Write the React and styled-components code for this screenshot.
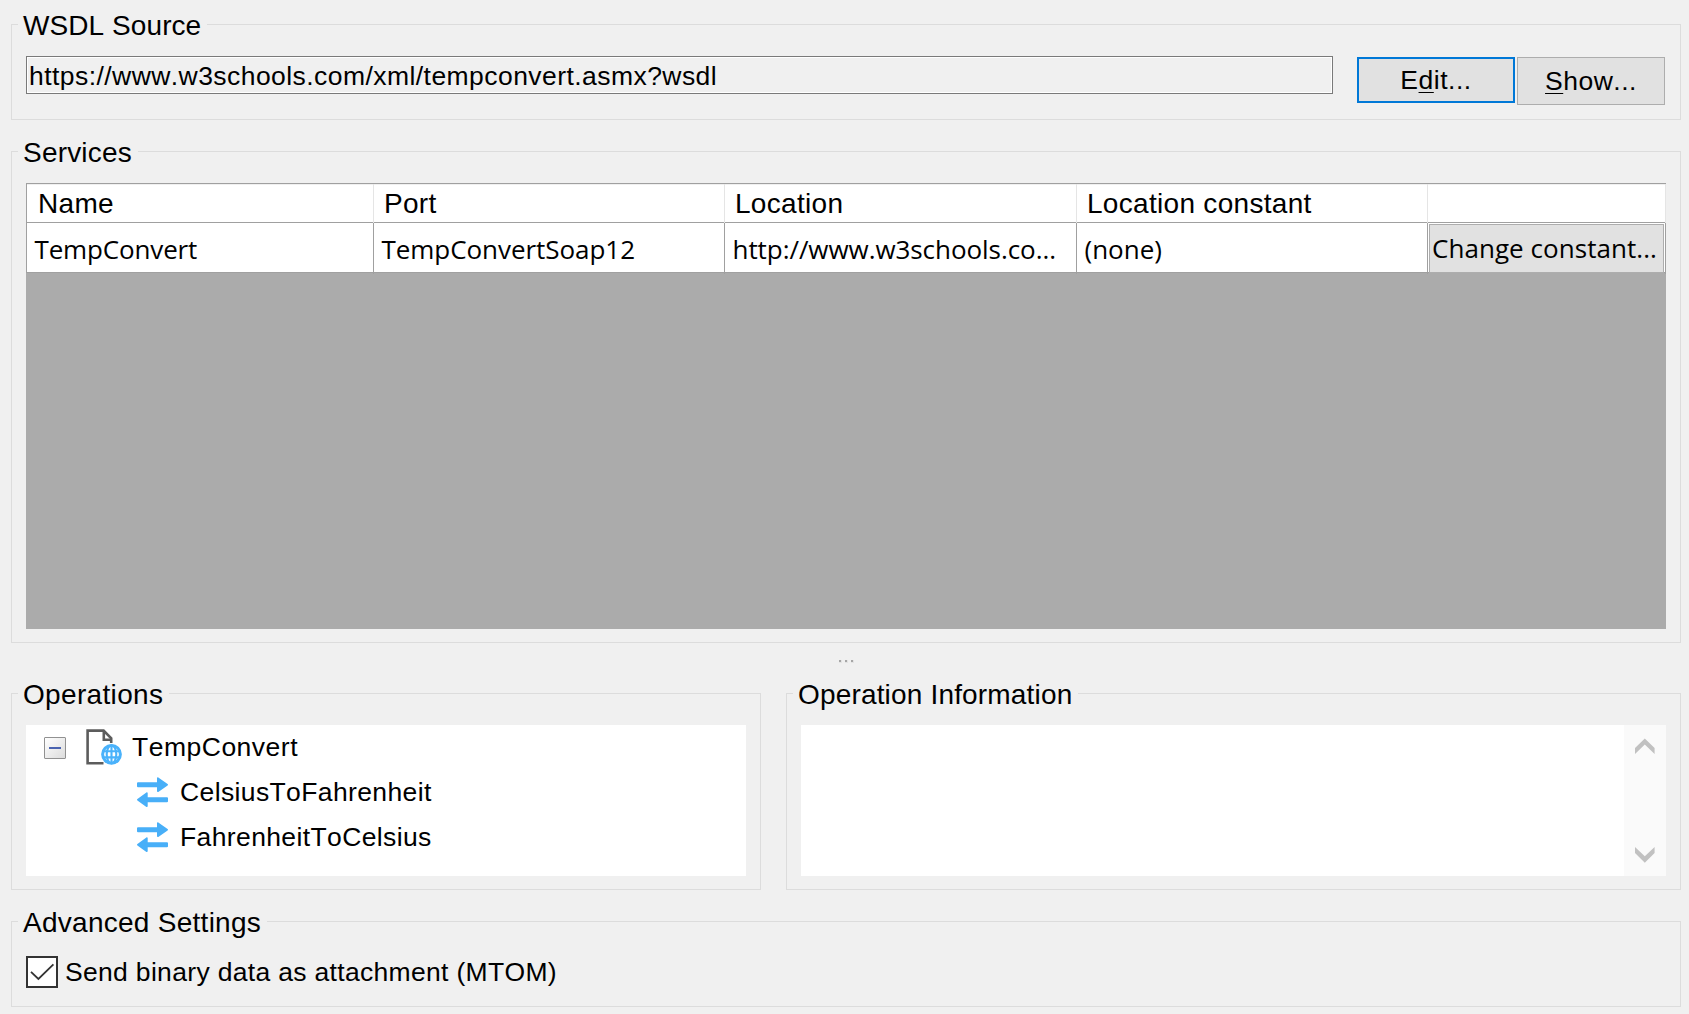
import React from "react";
import styled, { createGlobalStyle } from "styled-components";

const GlobalStyle = createGlobalStyle`
  *, *::before, *::after { box-sizing: border-box; }
  body {
    margin: 0;
    background: #f0f0f0;
    color: #000;
    font-family: "Liberation Sans", Arial, sans-serif;
    font-size: 26.5px;
    font-kerning: none;
    overflow: hidden;
  }
`;

const Window = styled.main`
  display: flex;
  flex-direction: column;
  gap: 16px;
  width: 1689px;
  height: 1014px;
  padding: 9px 8px 7px 11px;
  background: #f0f0f0;
`;

const Group = styled.fieldset`
  min-width: 0;
  margin: 0;
  width: ${(p) => p.$width || "auto"};
  height: ${(p) => p.$height}px;
  flex: ${(p) => (p.$grow ? "1 1 0" : "none")};
  padding: ${(p) => p.$top || 16}px 14px 13px;
  border: 1px solid #dcdcdc;
`;

const Legend = styled.legend`
  height: 31px;
  margin-left: -8px;
  padding: 0 6px 0 5px;
  font-size: 28px;
  line-height: 33px;
  letter-spacing: ${(p) => p.$spacing || 0}px;
  white-space: nowrap;
`;

const SourceRow = styled.div`
  display: flex;
  align-items: flex-start;
`;

const UrlField = styled.div`
  width: 1307px;
  height: 38px;
  margin-right: 24px;
  padding: 1px 0 0 2px;
  border: 1px solid #7a7a7a;
  box-shadow: inset 0 0 0 1px #fff;
  line-height: 36px;
  letter-spacing: 0.44px;
`;

const Button = styled.button`
  width: ${(p) => p.$width}px;
  height: ${(p) => p.$height}px;
  margin: 1px ${(p) => (p.$focused ? 2 : 0)}px 0 0;
  padding: 0;
  border: ${(p) => (p.$focused ? "2px solid #0078d7" : "1px solid #adadad")};
  background: #e1e1e1;
  color: #000;
  font: inherit;
  line-height: 40px;
  letter-spacing: 0.5px;
`;

const Key = styled.span`
  text-decoration: underline;
  text-decoration-thickness: 1px;
  text-underline-offset: 3px;
  text-decoration-skip-ink: none;
`;

const Stack = styled.div`
  display: flex;
  flex-direction: column;
`;

const Grid = styled.div`
  height: 446px;
  background: #ababab;
`;

const columns = "348px 351px 352px 351px 238px";

const GridHeader = styled.div`
  display: grid;
  grid-template-columns: ${columns};
  height: 40px;
  border-top: 1px solid #a0a0a0;
  border-bottom: 1px solid #a0a0a0;
  background: #fff;
  box-shadow: inset 1px 0 #a0a0a0, inset 0 1px #f0f0f0;
  font-size: 28px;
  line-height: 39px;
`;

const HeaderCell = styled.div`
  padding-left: ${(p) => (p.$first ? 12 : 10)}px;
  border-right: 1px solid #e5e5e5;
  letter-spacing: 0.3px;
`;

const GridRow = styled.div`
  display: grid;
  grid-template-columns: ${columns};
  height: 50px;
  border-bottom: 1px solid #a0a0a0;
  background: #fff;
  box-shadow: inset 1px 0 #a0a0a0;
  font-family: "Open Sans", "Noto Sans", sans-serif;
  font-size: 26px;
  line-height: 49px;
`;

const Cell = styled.div`
  padding: 2px 0 0 ${(p) => (p.$first ? 8.5 : 7.5)}px;
  border-right: 1px solid #a0a0a0;
  white-space: nowrap;
  letter-spacing: ${(p) => p.$spacing || 0}px;
`;

const ButtonCell = styled.div`
  display: flex;
  padding: 1px;
  border-right: 1px solid #a0a0a0;
`;

const CellButton = styled.button`
  flex: 1;
  min-width: 0;
  padding: 0 0 0 2px;
  border: 1px solid #adadad;
  background: #e1e1e1;
  color: #000;
  font: inherit;
  line-height: 45px;
  text-align: left;
  white-space: nowrap;
  letter-spacing: 0.05px;
`;

const Splitter = styled.div`
  display: flex;
  justify-content: center;
  gap: 3px;
  height: 35px;
  padding-top: 17px;
`;

const Grip = styled.span`
  width: 3px;
  height: 3px;
  background: linear-gradient(#a6a6a6, #a6a6a6) 0 0 / 2px 2px no-repeat, #e3e3e3;
`;

const Panels = styled.div`
  display: flex;
  gap: 25px;
`;

const Tree = styled.div`
  height: 151px;
  background: #fff;
`;

const TreeRow = styled.div`
  display: flex;
  align-items: flex-start;
  height: 45px;
  padding-left: ${(p) => (p.$child ? 111 : 18)}px;
  > svg {
    margin-top: ${(p) => (p.$child ? 7 : 4)}px;
  }
`;

const TreeLabel = styled.span`
  height: 45px;
  margin-left: 10px;
  line-height: 45px;
  letter-spacing: ${(p) => p.$spacing}px;
`;

const Toggle = styled.span`
  display: flex;
  align-items: center;
  justify-content: center;
  width: 22px;
  height: 22px;
  margin: 12px 20px 0 0;
  border: 1px solid #919191;
  border-radius: 1px;
  background: linear-gradient(135deg, #fff, #dcdcdc);
  &::before {
    content: "";
    width: 12px;
    height: 2px;
    background: #4a63b0;
  }
`;

const InfoBox = styled.div`
  display: flex;
  justify-content: flex-end;
  height: 151px;
  background: #fff;
`;

const ScrollBar = styled.div`
  display: flex;
  flex-direction: column;
  justify-content: space-between;
  align-items: center;
  width: 42px;
  padding: 13px 1px 13px 0;
  background: #fafafa;
`;

const CheckRow = styled.label`
  display: flex;
  gap: 7px;
  line-height: 32px;
  letter-spacing: 0.32px;
`;

const CheckBox = styled.span`
  width: 32px;
  height: 32px;
  border: 2px solid #333;
  background: #fff;
  svg { display: block; }
`;

const FileGlobeIcon = () => (
  <svg width="36" height="36" viewBox="0 0 36 36" fill="none">
    <path d="M17.5 34.2H1.6V1.6h16l7.6 7.8V14" stroke="#5c5c5c" strokeWidth="2.6" />
    <path d="M17.8 2v8.8h7.6" stroke="#5c5c5c" strokeWidth="2.6" />
    <circle cx="25.5" cy="25.3" r="8.9" fill="#fff" stroke="#4ab2fb" strokeWidth="3" />
    <g stroke="#4ab2fb" strokeWidth="2.1">
      <ellipse cx="25.5" cy="25.3" rx="4.8" ry="9" />
      <path d="M25.5 16v18.6M16.8 22.2h17.4M16.8 28.4h17.4" />
    </g>
  </svg>
);

const SwapIcon = () => (
  <svg width="33" height="31" viewBox="0 0 33 31" fill="#48aff8">
    <path d="M1 5.3h19V1c0-.7.8-1 1.3-.6l9.3 6.6c.5.4.5 1 0 1.4l-9.3 6.5c-.5.4-1.3.1-1.3-.6v-4H1a1 1 0 0 1-1-1v-3a1 1 0 0 1 1-1z" />
    <path d="M30 20.3H10.7V16c0-.7-.8-1-1.3-.6L.4 22c-.5.4-.5 1 0 1.4l9 6.5c.5.4 1.3.1 1.3-.6v-4H30a1 1 0 0 0 1-1v-3a1 1 0 0 0-1-1z" />
  </svg>
);

const Arrow = ({ down }) => (
  <svg width="20" height="16" viewBox="0 0 20 16" fill="#c1c1c1">
    <path d={down ? "M0 0l9.8 9.3L19.6 0v6L9.8 15.7 0 6z" : "M0 16l9.8-9.6L19.6 16v-6L9.8.5 0 10z"} />
  </svg>
);

export default function App() {
  return (
    <>
      <GlobalStyle />
      <Window>
        <Group $height={111}>
          <Legend $spacing={0.08}>WSDL Source</Legend>
          <SourceRow>
            <UrlField>https://www.w3schools.com/xml/tempconvert.asmx?wsdl</UrlField>
            <Button $focused $width={158} $height={46}>E<Key>d</Key>it...</Button>
            <Button $width={148} $height={48}><Key>S</Key>how...</Button>
          </SourceRow>
        </Group>
        <Stack>
          <Group $height={507}>
            <Legend $spacing={0.2}>Services</Legend>
            <Grid>
              <GridHeader>
                <HeaderCell $first>Name</HeaderCell>
                <HeaderCell>Port</HeaderCell>
                <HeaderCell>Location</HeaderCell>
                <HeaderCell>Location constant</HeaderCell>
                <HeaderCell />
              </GridHeader>
              <GridRow>
                <Cell $first $spacing={-0.15}>TempConvert</Cell>
                <Cell $spacing={-0.05}>TempConvertSoap12</Cell>
                <Cell $spacing={-0.06}>http://www.w3schools.co...</Cell>
                <Cell>(none)</Cell>
                <ButtonCell><CellButton>Change constant...</CellButton></ButtonCell>
              </GridRow>
            </Grid>
          </Group>
          <Splitter><Grip /><Grip /><Grip /></Splitter>
          <Panels>
            <Group $width="750px" $height={212}>
              <Legend $spacing={0.33}>Operations</Legend>
              <Tree>
                <TreeRow><Toggle /><FileGlobeIcon /><TreeLabel $spacing={0.5}>TempConvert</TreeLabel></TreeRow>
                <TreeRow $child><SwapIcon /><TreeLabel $spacing={0.38}>CelsiusToFahrenheit</TreeLabel></TreeRow>
                <TreeRow $child><SwapIcon /><TreeLabel $spacing={0.38}>FahrenheitToCelsius</TreeLabel></TreeRow>
              </Tree>
            </Group>
            <Group $grow $height={212}>
              <Legend $spacing={0.17}>Operation Information</Legend>
              <InfoBox>
                <ScrollBar><Arrow /><Arrow down /></ScrollBar>
              </InfoBox>
            </Group>
          </Panels>
        </Stack>
        <Group $height={101} $top={19}>
          <Legend $spacing={0.27}>Advanced Settings</Legend>
          <CheckRow>
            <CheckBox>
              <svg width="28" height="28" viewBox="0 0 28 28" fill="none" stroke="#333" strokeWidth="1.8">
                <path d="M3 13.8l7.4 7.2L25.4 6.3" />
              </svg>
            </CheckBox>
            Send binary data as attachment (MTOM)
          </CheckRow>
        </Group>
      </Window>
    </>
  );
}
